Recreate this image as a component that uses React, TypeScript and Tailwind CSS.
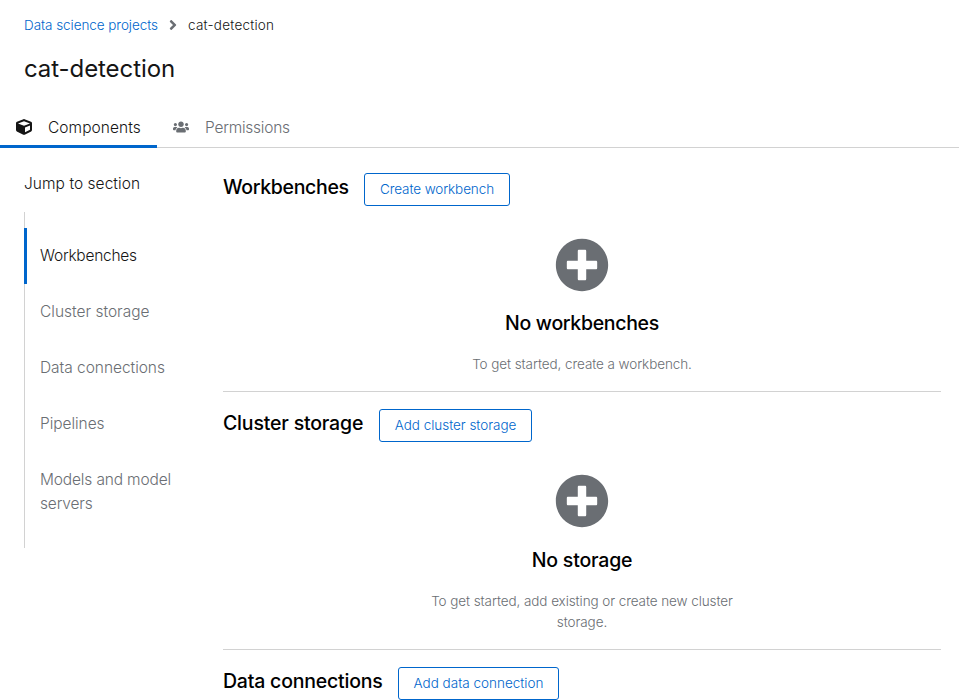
import type { ReactNode } from "react";
import { FaAngleRight, FaCube, FaPlusCircle, FaUsers } from "react-icons/fa";

type SectionProps = {
  title: string;
  titleClass: string;
  action: string;
  actionClass: string;
  className?: string;
  children?: ReactNode;
};

function Section({ title, titleClass, action, actionClass, className = "", children }: SectionProps) {
  return (
    <section className={`border-b border-[#d2d2d2] ${className}`}>
      <div className="flex items-start gap-4">
        <h2 className={`mt-[1px] h-[26px] whitespace-nowrap text-[19.5px] leading-[26px] font-[480] text-black ${titleClass}`}>{title}</h2>
        <button className={`h-[33px] rounded-[3px] border border-[#0066cc] text-center text-[13.5px] leading-[31px] font-light whitespace-nowrap text-[#0066cc] ${actionClass}`}>
          {action}
        </button>
      </div>
      {children}
    </section>
  );
}

function EmptyState({ title, className = "", titleClass, children }: { title: string; className?: string; titleClass: string; children: ReactNode }) {
  return (
    <div className="flex flex-col items-center pt-8 text-center">
      <FaPlusCircle className="size-[54px] text-[#6a6e73]" />
      <div className={className}>
        <h3 className={`text-[19.5px] leading-[26px] font-[480] text-black ${titleClass}`}>{title}</h3>
        <div className="mt-[18px] text-[13.5px] leading-[21px] font-light tracking-[-0.08px] text-[#6a6e73]">{children}</div>
      </div>
    </div>
  );
}

const links = [
  { label: "Workbenches", tracking: "tracking-[-0.24px]" },
  { label: "Cluster storage", tracking: "tracking-[0px]" },
  { label: "Data connections", tracking: "tracking-[-0.04px]" },
  { label: "Pipelines", tracking: "tracking-[-0.05px]" },
  { label: "Models and model servers", tracking: "tracking-[-0.15px]" },
];

export default function App() {
  return (
    <div className="h-[700px] overflow-hidden bg-white font-['Inter','Liberation_Sans',sans-serif] text-[#151515]">
      <nav className="flex h-[36px] items-center pt-[15px] pl-6 text-[13.5px] leading-[21px] font-light">
        <a className="w-[134px] whitespace-nowrap text-[#0066cc] tracking-[-0.06px]">Data science projects</a>
        <FaAngleRight className="mx-[7px] -mt-px size-4 text-[#6a6e73]" />
        <span className="tracking-[0.22px]">cat-detection</span>
      </nav>
      <h1 className="mt-[17px] pl-6 text-[24px] leading-[31px] tracking-[-0.08px]">cat-detection</h1>

      <div className="mt-6 flex h-10 border-b border-[#d2d2d2] text-[15.5px] font-light">
        <div className="-mb-px flex w-[157px] items-center gap-4 border-b-[3px] border-[#0066cc] pt-[2px] pl-4">
          <FaCube className="-mt-[2px] size-4" />
          <span className="tracking-[0.06px]">Components</span>
        </div>
        <div className="flex items-center gap-4 pl-4 text-[#6a6e73]">
          <FaUsers className="-mt-[2px] size-4" />
          <span className="tracking-[-0.24px]">Permissions</span>
        </div>
      </div>

      <div className="flex">
        <aside className="w-[223px] shrink-0 pt-6 pl-6 text-[15.5px] leading-6 font-light">
          <div className="tracking-[0.05px]">Jump to section</div>
          <ul className="mt-4 w-[164px] border-l border-[#d2d2d2] py-4">
            {links.map((link, i) => (
              <li
                key={link.label}
                className={`-ml-px border-l-[3px] py-4 pl-[13px] ${link.tracking} ${i === 0 ? "border-[#0066cc] text-[#151515]" : "border-transparent text-[#6a6e73]"}`}
              >
                {link.label}
              </li>
            ))}
          </ul>
        </aside>
        <main className="w-[718px] shrink-0 pt-[25px]">
          <Section title="Workbenches" titleClass="w-[125px] tracking-[-0.32px]" action="Create workbench" actionClass="w-[146px] tracking-[-0.1px]" className="h-[219px]">
            <EmptyState title="No workbenches" className="pt-[18px]" titleClass="tracking-[-0.32px]">
              To get started, create a workbench.
            </EmptyState>
          </Section>
          <Section title="Cluster storage" titleClass="w-[140px] tracking-[-0.18px]" action="Add cluster storage" actionClass="w-[153px] tracking-[-0.03px]" className="mt-[17px] h-[241px]">
            <EmptyState title="No storage" className="pt-[19px]" titleClass="tracking-[-0.18px]">
              To get started, add existing or create new cluster
              <br />
              storage.
            </EmptyState>
          </Section>
          <Section title="Data connections" titleClass="w-[159px] tracking-[-0.21px]" action="Add data connection" actionClass="w-[161px]" className="mt-[17px] h-[219px]" />
        </main>
      </div>
    </div>
  );
}
